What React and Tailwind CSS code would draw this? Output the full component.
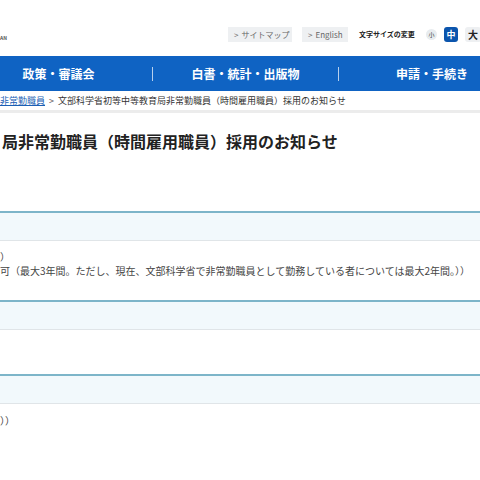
const HeadRow = () => (
  <div className="h-[30px] border-t-[2px] border-[#7db5c9] border-b border-b-[#e0e5e8] bg-[#f2f9fc]" />
);

const App = () => {
  return (
    <div className="w-[480px] h-[480px] overflow-hidden bg-white text-[#333] font-['Noto_Sans_CJK_JP','Noto_Sans',sans-serif]">
      {/* header */}
      <header className="flex h-[56px]">
        <div className="w-[228px] shrink-0 pt-[35px] text-[5px] font-bold leading-none text-[#555]">
          AN
        </div>
        <div className="flex items-center h-[15px] mt-[27px] shrink-0 whitespace-nowrap">
          <a className="flex items-center w-[64px] h-[15px] bg-[#eef0f2] text-[8px] text-[#666] pl-[6px] gap-[3px]">
            <span>&gt;</span>
            <span>サイトマップ</span>
          </a>
          <a className="ml-[10px] flex items-center w-[46px] h-[15px] bg-[#eef0f2] text-[8px] text-[#666] pl-[6px] gap-[3px]">
            <span>&gt;</span>
            <span>English</span>
          </a>
          <span className="ml-[11px] text-[7px] font-bold text-[#222] w-[59px]">文字サイズの変更</span>
          <span className="ml-[8px] flex items-center justify-center w-[11px] h-[11px] rounded-full bg-[#e8ecef] text-[6px] text-[#333]">
            小
          </span>
          <span className="ml-[7px] flex items-center justify-center w-[14px] h-[15px] rounded-[3px] bg-[#0b55ad] text-[9px] font-bold text-white">
            中
          </span>
          <span className="ml-[7px] flex items-center justify-center w-[16px] h-[15px] rounded-[3px] bg-[#eef0f2] text-[10px] font-bold text-[#222]">
            大
          </span>
        </div>
      </header>

      {/* global nav */}
      <nav className="h-[35px] bg-[#0f63c3] flex items-center -ml-[35px] w-[580px]">
        <div className="w-[187px] text-center text-white text-[12px] font-bold">政策・審議会</div>
        <div className="w-px h-[14px] bg-white/70" />
        <div className="w-[185px] text-center text-white text-[12px] font-bold">白書・統計・出版物</div>
        <div className="w-px h-[14px] bg-white/70" />
        <div className="w-[186px] text-center text-white text-[12px] font-bold">申請・手続き</div>
      </nav>

      {/* breadcrumb */}
      <div className="h-[22px] border-b-[3px] border-[#ececec] flex items-center whitespace-nowrap text-[9px] leading-none pb-[1px]">
        <a className="text-[#1a5fb4] underline underline-offset-1">非常勤職員</a>
        <span className="mx-[4px] text-[#555]">&gt;</span>
        <span className="text-[#333]">文部科学省初等中等教育局非常勤職員（時間雇用職員）採用のお知らせ</span>
      </div>

      {/* title */}
      <h1 className="mt-[18px] ml-[2px] text-[16px] font-bold leading-[20px] text-[#222] whitespace-nowrap">
        局非常勤職員（時間雇用職員）採用のお知らせ
      </h1>

      <div className="mt-[60px]">
        <HeadRow />
        <div className="h-[59px] pt-[9px] text-[10px] leading-[14px] text-[#444] whitespace-nowrap">
          <p>）</p>
          <p>可（最大3年間。ただし、現在、文部科学省で非常勤職員として勤務している者については最大2年間。））</p>
        </div>
        <HeadRow />
        <div className="h-[44px]" />
        <HeadRow />
        <div className="pt-[10px] text-[10px] leading-[14px] text-[#444] whitespace-nowrap">
          <p>））</p>
        </div>
      </div>
    </div>
  );
};

export default App;
